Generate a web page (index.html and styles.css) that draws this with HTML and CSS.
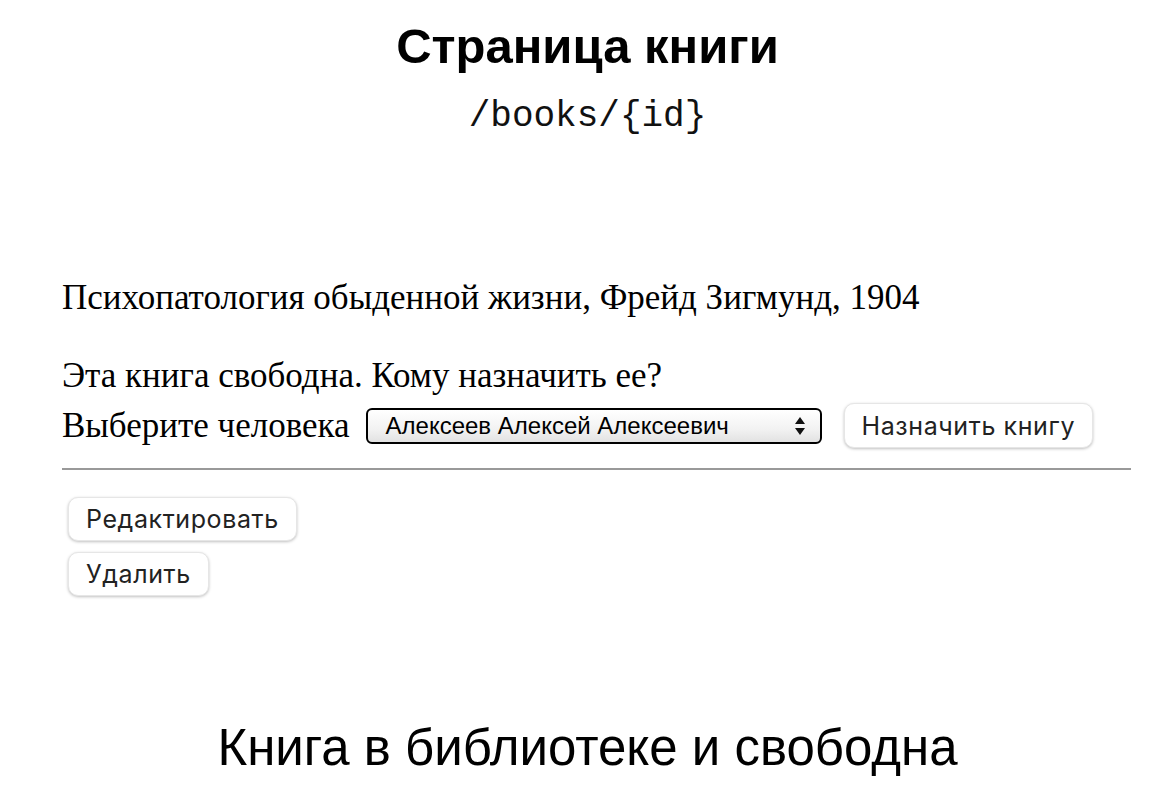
FILE: index.html
```html
<!DOCTYPE html>
<html lang="ru">
<head>
<meta charset="utf-8">
<title>Страница книги</title>
<link rel="stylesheet" href="styles.css">
</head>
<body>
<div class="page">
  <h1 class="title">Страница книги</h1>
  <div class="route">/books/{id}</div>
  <div class="content">
    <p class="book">Психопатология обыденной жизни, Фрейд Зигмунд, 1904</p>
    <p class="free">Эта книга свободна. Кому назначить ее?</p>
    <div class="assign">
      <span class="label">Выберите человека</span>
      <div class="select">
        <span class="select-text">Алексеев Алексей Алексеевич</span>
        <svg class="arrows" width="12" height="20" viewBox="0 0 12 20"><path d="M6 1 L11 8 H1 Z M6 19 L11 12 H1 Z" fill="#111"/></svg>
      </div>
      <button class="btn">Назначить книгу</button>
    </div>
    <hr class="rule">
    <div class="actions">
      <button class="btn">Редактировать</button>
      <button class="btn">Удалить</button>
    </div>
  </div>
  <div class="status">Книга в библиотеке и свободна</div>
</div>
</body>
</html>
```
FILE: styles.css
```css
html, body {
  margin: 0;
  padding: 0;
  background: #fff;
}
.page {
  padding: 0 20px 0 44px;
  color: #000;
}
.title {
  margin: 0;
  padding-top: 18px;
  text-align: center;
  font-family: "Liberation Sans", Arial, sans-serif;
  font-weight: bold;
  font-size: 49px;
  line-height: 56px;
}
.route {
  margin-top: 23px;
  text-align: center;
  font-family: "Liberation Mono", "Courier New", monospace;
  font-size: 36px;
  line-height: 40px;
  color: #111;
}
.content {
  padding-left: 18px;
  margin-top: 141px;
  font-family: "Liberation Serif", "Times New Roman", serif;
  font-size: 35px;
}
.book {
  margin: 0;
  line-height: 40px;
}
.free {
  margin: 38px 0 0;
  line-height: 40px;
}
.assign {
  display: flex;
  align-items: center;
  margin-top: 7px;
}
.label {
  line-height: 40px;
}
.select {
  display: flex;
  align-items: center;
  justify-content: space-between;
  width: 456px;
  height: 36px;
  box-sizing: border-box;
  margin-left: 16px;
  padding: 0 14px 0 18px;
  border: 2px solid #000;
  border-radius: 6px;
  background: linear-gradient(#ffffff, #f2f2f2 60%, #e2e2e2);
  font-family: "Liberation Sans", Arial, sans-serif;
  font-size: 24px;
}
.arrows {
  display: block;
}
.btn {
  font-family: Inter, "Noto Sans", sans-serif;
  font-size: 25px;
  letter-spacing: 0.6px;
  color: #222;
  background: #fff;
  border: 1px solid #e6e6e6;
  border-radius: 10px;
  box-shadow: 0 1px 3px rgba(0,0,0,0.25);
  padding: 0 17px;
  height: 45px;
  margin: 0;
}
.assign .btn {
  margin-left: 22px;
}
.rule {
  margin: 20px 0 0;
  border: 0;
  border-top: 2px solid #999;
  height: 0;
}
.actions {
  display: flex;
  flex-direction: column;
  align-items: flex-start;
  gap: 11px;
  margin-top: 27px;
  padding-left: 6px;
}
.actions .btn {
  height: 44px;
}
.status {
  margin-top: 122px;
  text-align: center;
  font-family: "Liberation Sans", Arial, sans-serif;
  font-size: 51px;
  line-height: 60px;
}
```
